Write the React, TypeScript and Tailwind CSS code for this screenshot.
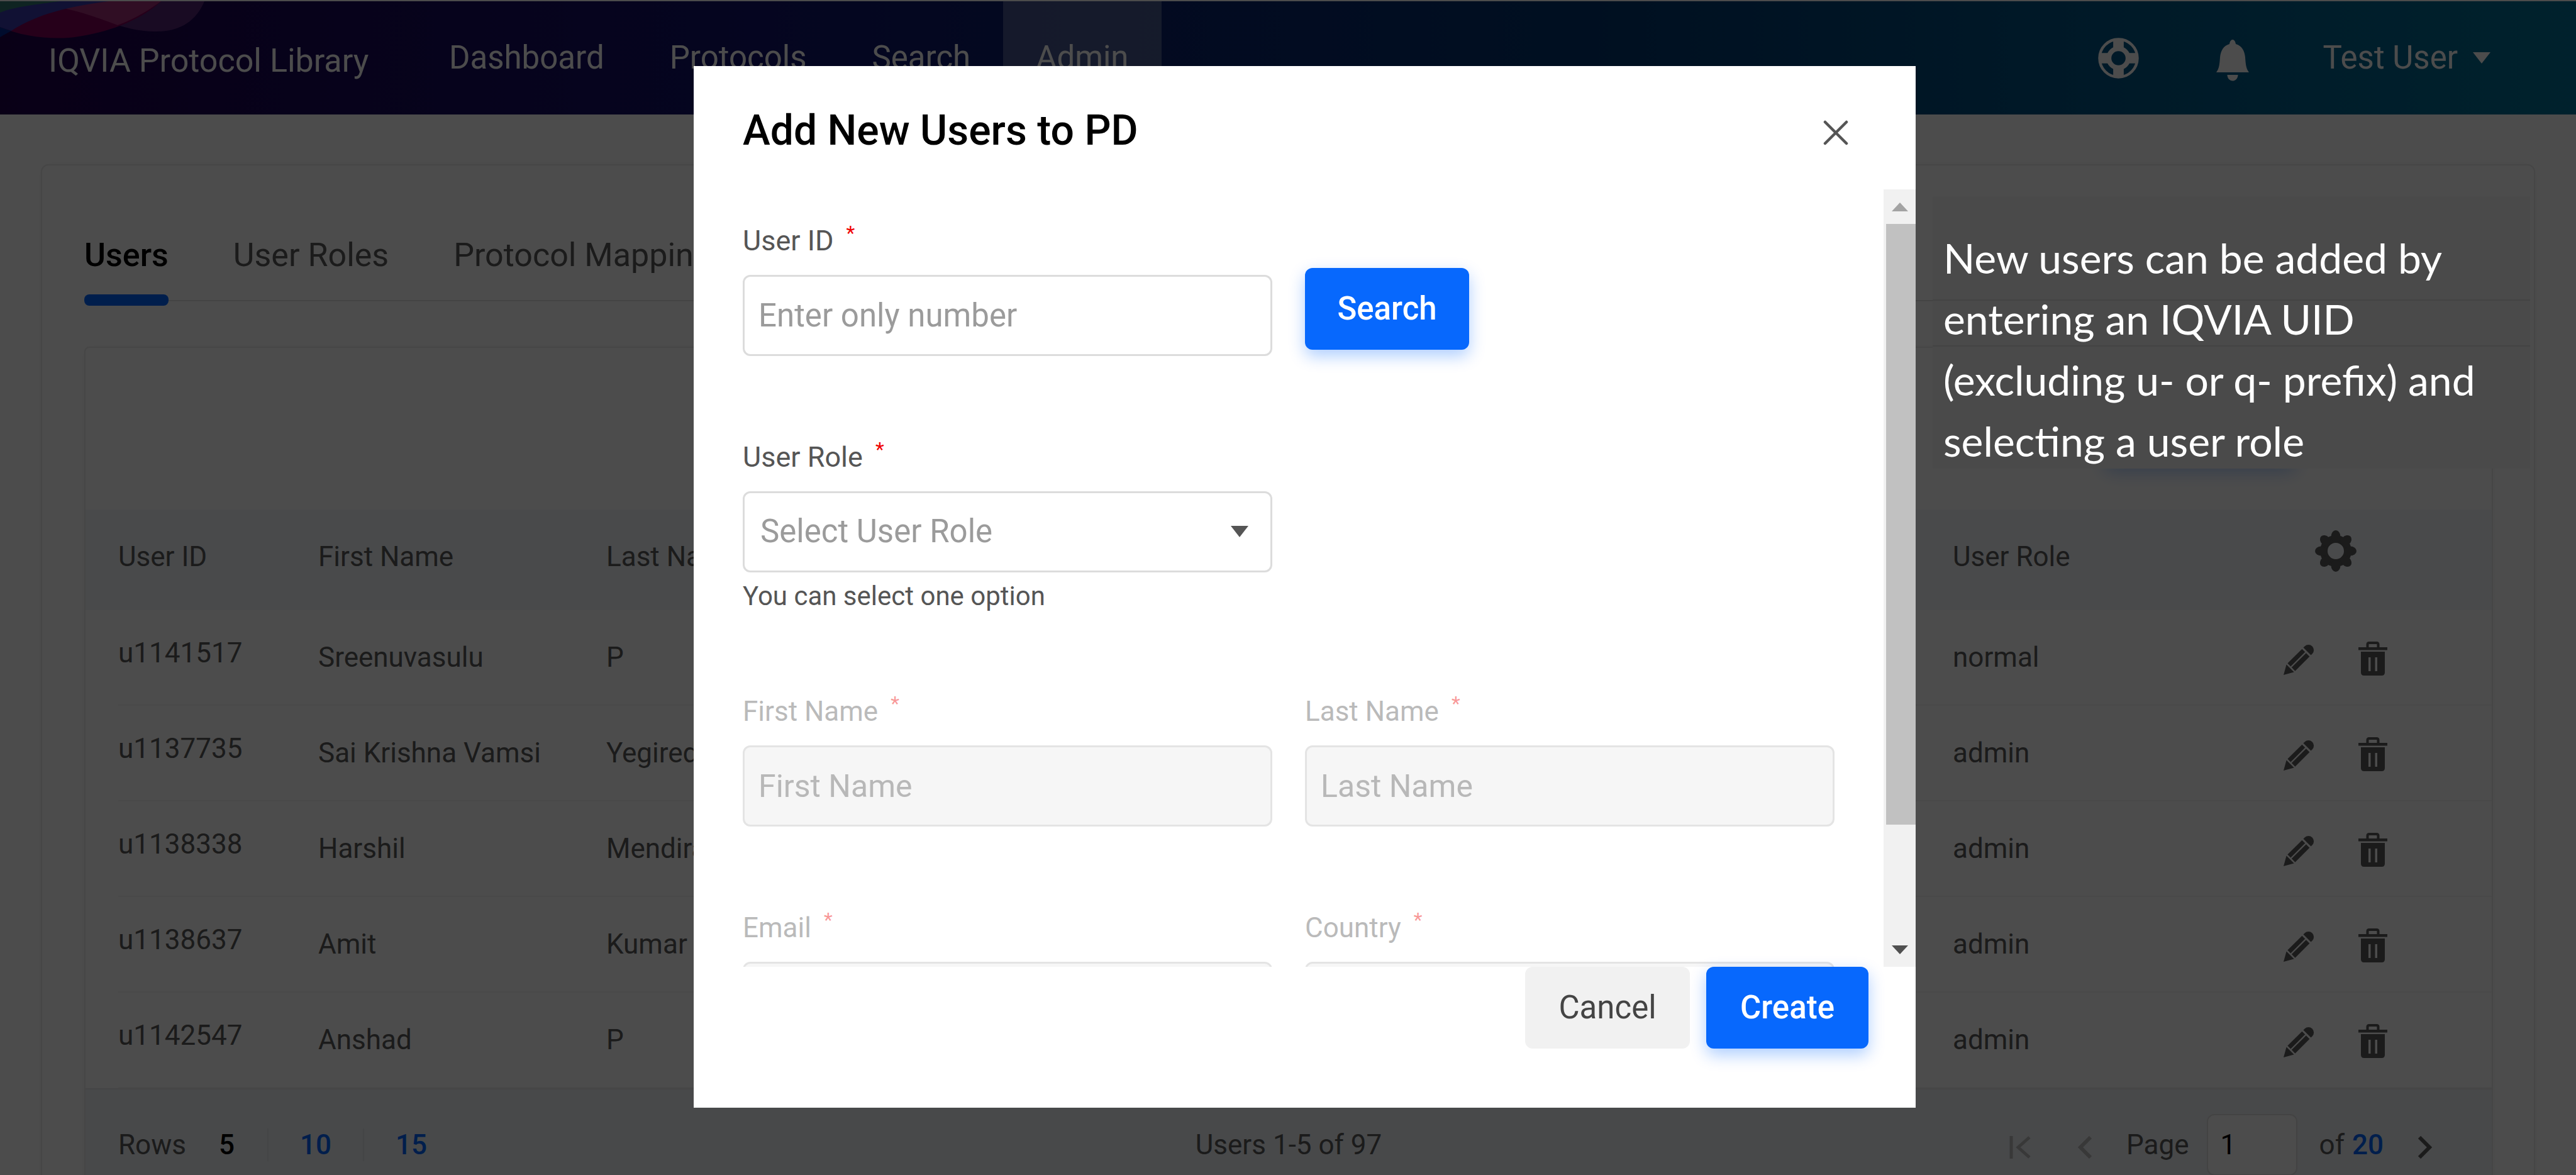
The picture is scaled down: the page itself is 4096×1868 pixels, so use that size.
import React from "react";

type User = { id: string; first: string; last: string; role: string };

const users: User[] = [
  { id: "u1141517", first: "Sreenuvasulu", last: "P", role: "normal" },
  { id: "u1137735", first: "Sai Krishna Vamsi", last: "Yegireddy", role: "admin" },
  { id: "u1138338", first: "Harshil", last: "Mendiratta", role: "admin" },
  { id: "u1138637", first: "Amit", last: "Kumar", role: "admin" },
  { id: "u1142547", first: "Anshad", last: "P", role: "admin" },
];

function Waves() {
  return (
    <svg className="absolute left-0 top-0" width="330" height="62" viewBox="0 0 330 62" aria-hidden="true">
      <path d="M60 0H325C312 32 285 48 250 48C215 48 190 40 150 24Z" fill="#642f80" fillOpacity=".8" />
      <path d="M0 41C40 58 90 62 125 56C165 50 220 34 256 0H0Z" fill="#800058" />
      <path d="M79 7C125 14 160 28 187 38C215 28 240 12 256 0H79Z" fill="#a03078" />
      <path d="M0 41L18 47L0 57Z" fill="#002a96" />
      <path d="M0 0H173C110 8 60 20 18 47L0 41Z" fill="#3a39ad" />
      <path d="M0 0H95C60 5 25 8 0 18Z" fill="#327a72" />
    </svg>
  );
}

function LifeBuoy() {
  return (
    <svg width="65" height="65" viewBox="-33 -33 66 66" fill="none" stroke="currentColor" aria-hidden="true">
      <circle r="30.5" strokeWidth="4.5" />
      <circle r="15.5" strokeWidth="8" />
      <path d="M0-13V-30M0 13V30M-13 0H-30M13 0H30" strokeWidth="17" />
    </svg>
  );
}

function Bell() {
  return (
    <svg width="52" height="66" viewBox="0 0 52 66" fill="currentColor" aria-hidden="true">
      <path d="M26 0C28.500 0 30.500 3 31 7C40 9.500 45 17 46 28C46.800 40 47.500 46 52 52H0C4.500 46 5.200 40 6 28C7 17 12 9.500 21 7C21.500 3 23.500 0 26 0Z" />
      <path d="M17.500 56H34.500C34.500 61 31 65.500 26 65.500S17.500 61 17.500 56Z" />
    </svg>
  );
}

function Caret({ className }: { className?: string }) {
  return (
    <svg className={className} width="28" height="18" viewBox="0 0 28 18" fill="currentColor" aria-hidden="true">
      <path d="M0 0H28L14 18Z" />
    </svg>
  );
}

function Gear() {
  return (
    <svg width="66" height="66" viewBox="-33 -33 66 66" fill="currentColor" aria-hidden="true">
      <circle r="19" fill="none" stroke="currentColor" strokeWidth="12" />
      {[0, 45, 90, 135, 180, 225, 270, 315].map((a) => (
        <ellipse key={a} cx="0" cy="-23" rx="7.500" ry="10" transform={`rotate(${a})`} />
      ))}
    </svg>
  );
}

function Pencil() {
  return (
    <svg width="52" height="52" viewBox="0 0 52 52" fill="currentColor" aria-hidden="true">
      <g transform="translate(0 52) rotate(-45)">
        <path d="M0 0L15-8.500V8.500Z" />
        <path d="M17.500-8.500H50V-1.500H17.500ZM17.500 .7H50V8.500H17.500Z" />
        <path d="M53-8.500H56A8.500 8.500 0 0 1 56 8.500H53Z" />
      </g>
    </svg>
  );
}

function Trash() {
  return (
    <svg width="46" height="54" viewBox="0 0 46 54" fill="currentColor" aria-hidden="true">
      <path d="M14.500 10V4.500Q14.500 2 17 2H29Q31.500 2 31.500 4.500V10" fill="none" stroke="currentColor" strokeWidth="4" />
      <path d="M0 9H46V13.500H0Z" />
      <path
        fillRule="evenodd"
        d="M4 16H42V49Q42 54 37 54H9Q4 54 4 49ZM16 25V47H19.500V25ZM26.500 25V47H30V25Z"
      />
    </svg>
  );
}

function Header() {
  const nav = ["Dashboard", "Protocols", "Search", "Admin"];
  return (
    <header className="relative flex h-[182px] items-stretch border-t-2 border-white bg-[linear-gradient(90deg,#1f004c_0%,#11136c_30%,#02356f_62%,#005082_78%,#007196_100%)] text-white">
      <Waves />
      <div className="flex w-[662px] shrink-0 items-center pl-[77px] pt-[10px] text-[52px]">IQVIA Protocol Library</div>
      <nav className="flex items-stretch">
        {nav.map((n) => (
          <a
            key={n}
            href="#"
            className={
              n === "Admin"
                ? "flex items-center bg-white/25 px-[52px] text-[51px]"
                : "flex items-center px-[52px] text-[51px]"
            }
          >
            {n}
          </a>
        ))}
      </nav>
      <div className="ml-auto flex items-center pr-[136px]">
        <button aria-label="Help">
          <LifeBuoy />
        </button>
        <button aria-label="Notifications" className="ml-[123px] pt-[8px]">
          <Bell />
        </button>
        <button className="ml-[118px] flex items-center gap-[24px] text-[51px]">
          Test User <Caret />
        </button>
      </div>
    </header>
  );
}

function UsersTable() {
  return (
    <table className="w-full table-fixed border-collapse text-left text-[44px] text-[#5a5a5a]">
      <colgroup>
        <col className="w-[370px]" />
        <col className="w-[458px]" />
        <col />
        <col className="w-[524px]" />
        <col className="w-[333px]" />
      </colgroup>
      <thead>
        <tr className="h-[160px] bg-[#f4f7fb]">
          <th className="pb-[10px] pl-[52px] font-normal">User ID</th>
          <th className="p-0 pb-[10px] font-normal">First Name</th>
          <th className="p-0 pb-[10px] font-normal">Last Name</th>
          <th className="p-0 pb-[10px] font-normal">User Role</th>
          <th className="p-0 pb-[28px] pl-[52px]">
            <button aria-label="Table settings" className="block">
              <Gear />
            </button>
          </th>
        </tr>
      </thead>
      <tbody>
        {users.map((u) => (
          <tr key={u.id}>
            <td className="p-0 pl-[52px]">
              <div className="flex h-[152px] items-center border-b-2 border-[#f4f4f4] pb-[14px]">{u.id}</div>
            </td>
            <td className="p-0">
              <div className="flex h-[152px] items-center border-b-2 border-[#f4f4f4]">{u.first}</div>
            </td>
            <td className="p-0">
              <div className="flex h-[152px] items-center border-b-2 border-[#f4f4f4]">{u.last}</div>
            </td>
            <td className="p-0">
              <div className="flex h-[152px] items-center border-b-2 border-[#f4f4f4]">{u.role}</div>
            </td>
            <td className="p-0">
              <div className="flex h-[152px] items-center gap-[67px] border-b-2 border-[#f4f4f4] pl-[2px] pt-[4px]">
                <button aria-label={`Edit ${u.id}`}>
                  <Pencil />
                </button>
                <button aria-label={`Delete ${u.id}`}>
                  <Trash />
                </button>
              </div>
            </td>
          </tr>
        ))}
      </tbody>
    </table>
  );
}

function Pager() {
  return (
    <div className="flex h-[178px] items-center border-t-2 border-[#e6e8ea] bg-[#f1f4f8] px-[52px] text-[44px] text-[#5a5a5a]">
      <div className="flex flex-1 items-center">
        <span className="mr-[52px]">Rows</span>
        <button className="pr-[52px] font-medium text-black">5</button>
        <button className="h-[52px] border-l-2 border-[#e3e6ea] px-[50px] font-medium leading-[52px] text-[#0067ff]">10</button>
        <button className="h-[52px] border-l-2 border-[#e3e6ea] px-[50px] font-medium leading-[52px] text-[#0067ff]">15</button>
      </div>
      <span>Users 1-5 of 97</span>
      <div className="flex flex-1 items-center justify-end">
        <button aria-label="First page" className="pt-[8px] text-[#bdbdbd]">
          <svg width="34" height="36" viewBox="0 0 34 36" fill="none" stroke="currentColor" strokeWidth="5">
            <path d="M3 0V36M32 2L14 18L32 34" />
          </svg>
        </button>
        <button aria-label="Previous page" className="ml-[74px] pt-[8px] text-[#bdbdbd]">
          <svg width="24" height="36" viewBox="0 0 24 36" fill="none" stroke="currentColor" strokeWidth="6">
            <path d="M21 2L5 18L21 34" />
          </svg>
        </button>
        <label htmlFor="page" className="ml-[54px]">
          Page
        </label>
        <input
          id="page"
          defaultValue="1"
          className="ml-[28px] h-[98px] w-[144px] rounded-[12px] border-2 border-[#e0e0e0] bg-white pl-[20px] text-black"
        />
        <span className="ml-[35px]">of</span>
        <span className="ml-[12px] font-medium text-[#0067ff]">20</span>
        <button aria-label="Next page" className="ml-[54px] mr-[42px] pt-[8px]">
          <svg width="24" height="36" viewBox="0 0 24 36" fill="none" stroke="currentColor" strokeWidth="6">
            <path d="M3 2L19 18L3 34" />
          </svg>
        </button>
      </div>
    </div>
  );
}

function AdminPage() {
  return (
    <main className="px-[65px] pt-[79px]">
      <section className="rounded-[12px] border-2 border-[#e9e9e9] pl-[67px] pr-[65px] shadow-[0_0_20px_rgba(0,0,0,0.03)]">
        <div className="flex h-[216px] items-end gap-[103px] border-b-2 border-[#e3e3e3] text-[52px] leading-[60px] text-[#5a5a5a]">
          <a href="#" className="-mb-[9px] flex h-[110px] flex-col justify-between font-medium text-black">
            Users
            <span className="h-[18px] rounded-[8px] bg-[#0067ff]" />
          </a>
          <a href="#" className="h-[101px]">
            User Roles
          </a>
          <a href="#" className="h-[101px]">
            Protocol Mapping
          </a>
        </div>
        <div className="mt-[72px] rounded-t-[8px] border-2 border-b-0 border-[#e9e9e9] shadow-[0_0_20px_rgba(0,0,0,0.03)]">
          <div className="flex h-[257px] items-end justify-end pb-[70px] pr-[312px]">
            <div className="h-[130px] w-[304px] rounded-[12px] bg-[#0067ff] shadow-[0_10px_28px_rgba(0,103,255,0.3)]" />
          </div>
          <UsersTable />
          <Pager />
        </div>
      </section>
    </main>
  );
}

function FieldLabel({ id, text, disabled }: { id: string; text: string; disabled?: boolean }) {
  return (
    <label
      htmlFor={id}
      className={
        disabled
          ? "mb-[24px] flex h-[60px] items-center gap-[20px] text-[44px] text-[#555] opacity-40"
          : "mb-[24px] flex h-[60px] items-center gap-[20px] text-[45px] text-[#555]"
      }
    >
      {text}
      <span className="pb-[26px] text-[32px] text-[#f00000]">*</span>
    </label>
  );
}

function DisabledField({ id, label }: { id: string; label: string }) {
  return (
    <div className="flex flex-col">
      <FieldLabel id={id} text={label} disabled />
      <input
        id={id}
        disabled
        placeholder={label}
        className="h-[129px] w-full rounded-[12px] border-[3px] border-[#e4e4e4] bg-[#f6f6f6] px-[22px] text-[50px] placeholder:text-[#b8b8b8]"
      />
    </div>
  );
}

function AddUserDialog() {
  return (
    <div
      role="dialog"
      aria-modal="true"
      aria-labelledby="dialog-title"
      className="flex h-full w-[1943px] max-w-full flex-col bg-white"
    >
      <div className="flex h-[196px] shrink-0 items-center justify-between pl-[78px] pr-[107px] pt-[8px]">
        <h2 id="dialog-title" className="text-[66px] font-medium text-black">
          Add New Users to PD
        </h2>
        <button aria-label="Close" className="pt-[8px] text-[#555]">
          <svg width="40" height="40" viewBox="0 0 40 40" fill="none" stroke="currentColor" strokeWidth="4.500" strokeLinecap="round">
            <path d="M3 3L37 37M37 3L3 37" />
          </svg>
        </button>
      </div>
      <div className="flex min-h-0 flex-1">
        <form className="grid min-h-0 flex-1 auto-rows-max grid-cols-2 gap-x-[52px] gap-y-[131px] overflow-hidden px-[78px] pt-[52px]">
          <div className="flex flex-col">
            <FieldLabel id="user-id" text="User ID" />
            <input
              id="user-id"
              placeholder="Enter only number"
              className="h-[129px] w-full rounded-[12px] border-[3px] border-[#dcdcdc] px-[22px] text-[51px] placeholder:text-[#9b9b9b]"
            />
          </div>
          <div className="flex items-end pb-[10px]">
            <button
              type="button"
              className="h-[130px] w-[261px] rounded-[12px] bg-[#0768fd] text-[51px] font-medium text-white shadow-[0_10px_26px_rgba(0,103,255,0.32)]"
            >
              Search
            </button>
          </div>
          <div className="flex flex-col">
            <FieldLabel id="user-role" text="User Role" />
            <div className="relative">
              <select
                id="user-role"
                className="block h-[129px] w-full appearance-none rounded-[12px] border-[3px] border-[#dcdcdc] bg-white px-[25px] text-[51px] text-[#9b9b9b]"
              >
                <option>Select User Role</option>
              </select>
              <Caret className="pointer-events-none absolute right-[38px] top-[55px] text-[#555]" />
            </div>
            <p className="flex h-[60px] items-center pt-[14px] text-[42px] text-[#555]">You can select one option</p>
          </div>
          <div />
          <DisabledField id="first-name" label="First Name" />
          <DisabledField id="last-name" label="Last Name" />
          <DisabledField id="email" label="Email" />
          <DisabledField id="country" label="Country" />
        </form>
        <div aria-hidden="true" className="flex w-[51px] flex-col items-end bg-[#f1f1f1]">
          <div className="flex h-[55px] w-full shrink-0 items-center justify-center text-[#a3a3a3]">
            <svg width="26" height="14" viewBox="0 0 26 14" fill="currentColor">
              <path d="M0 14H26L13 0Z" />
            </svg>
          </div>
          <div className="h-[955px] w-[47px] bg-[#c1c1c1]" />
          <div className="mt-auto flex h-[55px] w-full shrink-0 items-center justify-center text-[#505050]">
            <svg width="26" height="14" viewBox="0 0 26 14" fill="currentColor">
              <path d="M0 0H26L13 14Z" />
            </svg>
          </div>
        </div>
      </div>
      <div className="flex h-[224px] shrink-0 items-start justify-end gap-[26px] pr-[75px]">
        <button className="h-[130px] w-[262px] rounded-[12px] bg-[#f1f1f1] text-[51px] text-[#444]">Cancel</button>
        <button className="h-[130px] w-[258px] rounded-[12px] bg-[#0768fd] text-[51px] font-medium text-white shadow-[0_10px_26px_rgba(0,103,255,0.32)]">
          Create
        </button>
      </div>
    </div>
  );
}

export default function App() {
  return (
    <div className="relative h-screen overflow-hidden bg-white font-['Roboto',sans-serif]">
      <Header />
      <AdminPage />
      <div className="fixed inset-0 flex justify-center bg-black/70 pb-[107px] pl-[53px] pt-[105px]">
        <AddUserDialog />
      </div>
      <aside className="absolute right-[73px] top-[312px] h-[433px] w-[950px] bg-[#4a4a4a] pl-[17px] pt-[49px] font-['Lato',sans-serif] text-[66px] leading-[97px] text-white">
        <div className="absolute inset-x-0 top-[164px] h-[75px] border-y-2 border-[#434343]" />
        <p className="relative">
          New users can be added by
          <br />
          entering an IQVIA UID
          <br />
          (excluding u- or q- prefix) and
          <br />
          selecting a user role
        </p>
      </aside>
    </div>
  );
}
